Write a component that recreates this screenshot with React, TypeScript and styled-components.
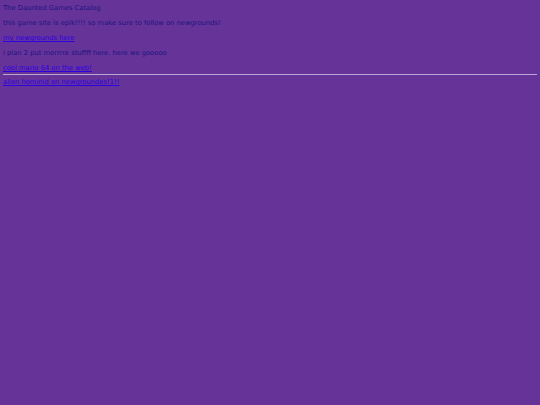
import React from 'react';
import styled, { createGlobalStyle } from 'styled-components';

const GlobalStyle = createGlobalStyle`
  html, body {
    background: #663399;
  }
  body {
    margin: 4px 3px 3px;
    font-family: "DejaVu Sans", Verdana, sans-serif;
    font-size: 6.75px;
    line-height: 8px;
    color: #1c1480;
  }
`;

const Page = styled.div`
  display: flex;
  flex-direction: column;
`;

const Line = styled.div<{ $gap?: number }>`
  margin: 0 0 ${({ $gap = 7 }) => $gap}px;
  white-space: nowrap;
`;

const Link = styled.a`
  color: #2a00e0;
  text-decoration: underline;
`;

const Rule = styled.hr`
  width: 100%;
  height: 0;
  margin: 0 0 3px;
  border: none;
  border-top: 1px solid #b9a7d8;
`;

export default function App() {
  return (
    <>
      <GlobalStyle />
      <Page>
        <Line>The Daunted Games Catalog</Line>
        <Line>this game site is epik!!!! so make sure to follow on newgrounds!</Line>
        <Line>
          <Link href="#">my newgrounds here</Link>
        </Line>
        <Line>i plan 2 put morrrre stuffff here. here we gooooo</Line>
        <Line $gap={2}>
          <Link href="#">cool mario 64 on the web!</Link>
        </Line>
        <Rule />
        <Line>
          <Link href="#">alien hominid on newgroundes!1!!</Link>
        </Line>
      </Page>
    </>
  );
}
